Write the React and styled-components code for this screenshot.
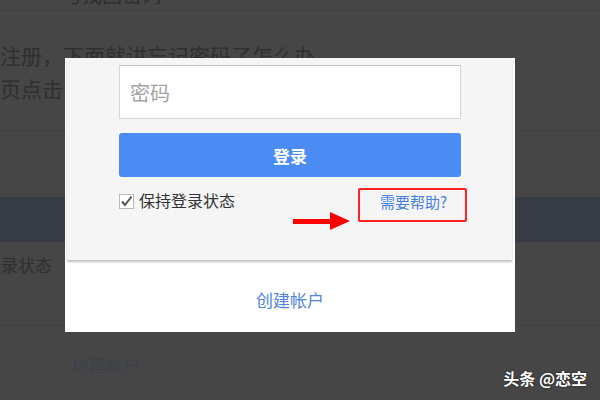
import React from "react";
import styled, { createGlobalStyle } from "styled-components";

const Global = createGlobalStyle`
  html, body { margin: 0; padding: 0; }
  body {
    width: 600px;
    height: 400px;
    overflow: hidden;
    background: #464646;
    font-family: "Noto Sans CJK SC", "Noto Sans", sans-serif;
  }
`;

const Screen = styled.div`
  position: relative;
  width: 600px;
  height: 400px;
  overflow: hidden;
  background: #464646;
`;

// dimmed page behind the dialog
const Page = styled.div`
  display: flex;
  flex-direction: column;
`;

const CutRow = styled.div`
  height: 13px;
  overflow: hidden;
  padding-left: 62px;
  border-bottom: 1px solid #4d4d4d;
  color: #2f2f2f;
  & span {
    display: block;
    margin-top: -15px;
    font-size: 20px;
    line-height: 20px;
  }
`;

const PageText = styled.div`
  height: 30px;
  margin-top: ${(p) => p.gap || 0}px;
  margin-left: ${(p) => p.indent || 0}px;
  font-size: ${(p) => p.size || 21}px;
  line-height: 30px;
  white-space: nowrap;
  color: ${(p) => p.color || "#2f2f2f"};
`;

const Rule = styled.div`
  height: 1px;
  background: #404040;
  margin-top: ${(p) => p.gap || 0}px;
`;

const Strip = styled.div`
  height: 45px;
  margin-top: ${(p) => p.gap}px;
  background: #373b44;
`;

const Dialog = styled.div`
  position: absolute;
  left: 65px;
  top: 58px;
  width: 450px;
  height: 274px;
  background: #fff;
  display: flex;
  flex-direction: column;
`;

const Card = styled.div`
  position: relative;
  margin: 0 3px 0 2px;
  height: 202px;
  background: #f5f5f5;
  box-shadow: 0 2px 2px rgba(0, 0, 0, 0.25);
  padding: 7px 0 0 52px;
  box-sizing: border-box;
  display: flex;
  flex-direction: column;
`;

const Input = styled.div`
  width: 342px;
  height: 54px;
  box-sizing: border-box;
  background: #fff;
  border: 1px solid #d6d6d6;
  border-top-color: #c4c4c4;
  padding-left: 10px;
  display: flex;
  align-items: center;
  font-size: 20px;
  color: #a3a3a3;
`;

const Button = styled.div`
  margin-top: 14px;
  width: 342px;
  height: 44px;
  border-radius: 3px;
  background: #4a8cf3;
  color: #fff;
  font-size: 17px;
  font-weight: bold;
  display: flex;
  align-items: center;
  justify-content: center;
`;

const Options = styled.div`
  margin-top: 11px;
  width: 348px;
  height: 34px;
  display: flex;
  align-items: flex-start;
  justify-content: space-between;
`;

const Keep = styled.label`
  height: 24px;
  display: flex;
  align-items: center;
  gap: 5px;
  font-size: 16px;
  color: #333;
`;

const Box = styled.span`
  width: 15px;
  height: 15px;
  margin-top: 3px;
  box-sizing: border-box;
  border: 1px solid #b9b9b9;
  background: #fff;
  display: flex;
  align-items: center;
  justify-content: center;
`;

const Help = styled.a`
  height: 34px;
  width: 109px;
  box-sizing: border-box;
  border: 2px solid #f22;
  border-radius: 2px;
  padding: 0 0 8px 20px;
  display: flex;
  align-items: center;
  font-size: 15px;
  color: #4a7fe0;
  text-decoration: none;
`;

const Arrow = styled.svg`
  position: absolute;
  left: 226px;
  top: 154px;
`;

const Footer = styled.div`
  flex: 1;
  display: flex;
  align-items: center;
  justify-content: center;
  padding-top: 6px;
  font-size: 17px;
  color: #4f84dc;
`;

const Mark = styled.div`
  position: absolute;
  right: 13px;
  bottom: 10px;
  font-size: 16px;
  font-weight: bold;
  color: #fff;
  text-shadow: 0 0 2px rgba(0, 0, 0, 0.8);
`;

export default function App() {
  return (
    <Screen>
      <Global />
      <Page>
        <CutRow><span>与找回密码</span></CutRow>
        <PageText gap={26}>注册，下面就讲忘记密码了怎么办</PageText>
        <PageText gap={3}>页点击“忘记密码”</PageText>
        <Rule gap={27} />
        <Strip gap={66} />
        <PageText gap={8} indent={-50} size={17}>保持登录状态</PageText>
        <Rule gap={45} />
        <PageText gap={24} indent={72} size={17} color="#3c414b">创建帐户</PageText>
      </Page>

      <Dialog>
        <Card>
          <Input>密码</Input>
          <Button>登录</Button>
          <Options>
            <Keep>
              <Box>
                <svg width="13" height="13" viewBox="0 0 13 13">
                  <path d="M2 6.5 L5 10 L11.5 1.5" fill="none" stroke="#555" strokeWidth="2" />
                </svg>
              </Box>
              保持登录状态
            </Keep>
            <Help href="#">需要帮助?</Help>
          </Options>
          <Arrow width="58" height="18" viewBox="0 0 58 18">
            <rect x="0" y="7" width="40" height="5" fill="#f00" />
            <path d="M37 0 L57 9 L37 18 Z" fill="#f00" />
          </Arrow>
        </Card>
        <Footer>创建帐户</Footer>
      </Dialog>

      <Mark>头条 @恋空</Mark>
    </Screen>
  );
}
